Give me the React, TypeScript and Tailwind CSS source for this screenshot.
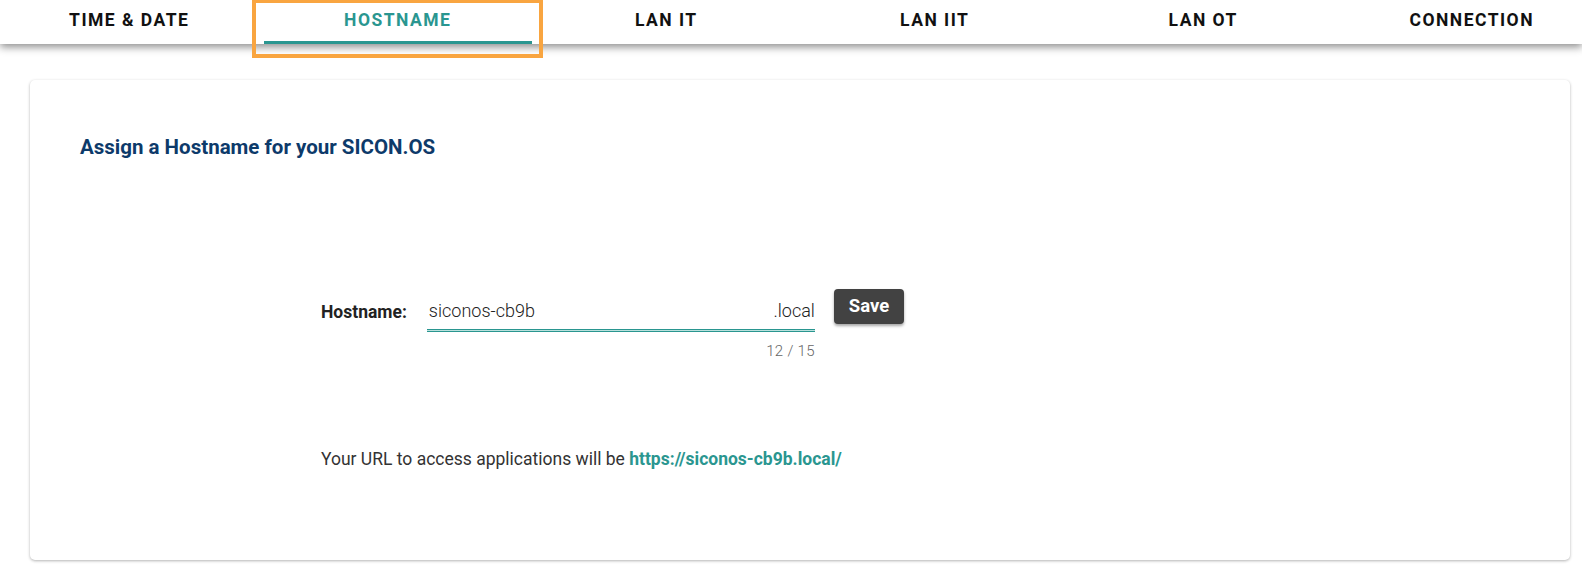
import React from 'react';

const tabs = ['Time & Date', 'Hostname', 'LAN IT', 'LAN IIT', 'LAN OT', 'Connection'];

export default function App() {
  const active = 1;
  return (
    <div className="h-screen overflow-hidden bg-white font-['Roboto',sans-serif] text-[#212121]">
      <div className="relative z-10 h-[44px] bg-white shadow-[0_3px_8px_rgba(0,0,0,0.45)]">
        <div className="flex h-full overflow-hidden">
          <div className="ml-[-5px] flex h-full flex-none">
            {tabs.map((t, i) => (
              <div
                key={t}
                className={
                  'relative flex w-[268.5px] flex-none items-center justify-center pb-[4px] text-[17.5px] font-bold uppercase tracking-[0.085em] ' +
                  (i === active ? 'text-[#2a9690]' : 'text-[#111]')
                }
              >
                {t}
                {i === active && <div className="absolute bottom-0 left-0 right-0 h-[3px] bg-[#2a9690]" />}
              </div>
            ))}
          </div>
        </div>
        {/* highlight box */}
        <div className="pointer-events-none absolute left-[252px] top-0 h-[58px] w-[291px] border-[4px] border-t-[3px] border-[#f9a540]" />
      </div>

      <div className="pl-[30px] pr-[12px] pt-[36px]">
        <div className="h-[480px] rounded-[5px] bg-white px-[50px] pt-[54px] shadow-[0_1px_3px_rgba(0,0,0,0.3)]">
          <h2 className="text-[20.5px] font-bold leading-[26px] text-[#0d3a6a]">Assign a Hostname for your SICON.OS</h2>

          <div className="pl-[241px] pt-[128px]">
            <div className="flex items-start">
              <div className="pt-[11px] pr-[20px] text-[17.5px] font-bold text-[#222]">Hostname:</div>
              <div className="w-[388px]">
                <div className="flex h-[41px] items-end justify-between pb-[5px] text-[18px] font-light text-[#222]">
                  <span className="pl-[2px]">siconos-cb9b</span>
                  <span>.local</span>
                </div>
                <div className="h-[3px] border-y border-[#2a9690] bg-[#b9e0dc]" />
                <div className="pt-[8px] text-right text-[15px] font-light tracking-[0.02em] text-[#666]">12 / 15</div>
              </div>
              <button className="ml-[19px] mt-[1px] h-[35px] rounded-[4px] bg-[#424242] px-[15px] text-[18.5px] font-bold text-white shadow-[0_2px_3px_rgba(0,0,0,0.35)]">
                Save
              </button>
            </div>

            <p className="pt-[83px] text-[17.5px] text-[#333]">
              Your URL to access applications will be{' '}
              <span className="font-bold text-[#2a9690]">https://siconos-cb9b.local/</span>
            </p>
          </div>
        </div>
      </div>
    </div>
  );
}
